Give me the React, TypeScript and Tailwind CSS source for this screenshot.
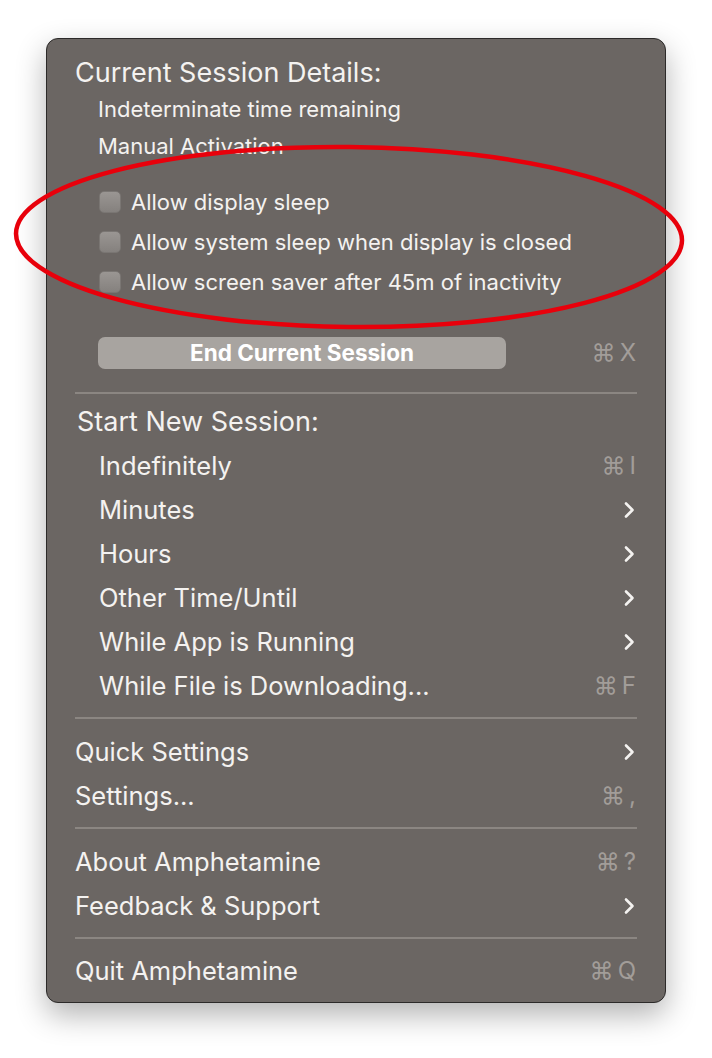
import { ReactNode } from 'react';

const font = { fontFamily: 'Inter, "Noto Sans", "Liberation Sans", sans-serif' };

function Chevron() {
  return (
    <svg width="16" height="20" viewBox="0 0 16 20" className="-mr-[1px]">
      <path d="M5 3.5l6.5 6.5-6.5 6.5" fill="none" stroke="#f4f2f0" strokeWidth="2.6" strokeLinecap="round" strokeLinejoin="round" />
    </svg>
  );
}

function Shortcut({ k }: { k: string }) {
  return (
    <span className="flex items-center gap-[4px] text-[24px] leading-none text-[#a29d99]">
      <span className="text-[24px]">⌘</span>
      <span>{k}</span>
    </span>
  );
}

function Row({ label, right, indent = true }: { label: string; right?: ReactNode; indent?: boolean }) {
  return (
    <div className={`flex items-center justify-between h-[44px] ${indent ? 'pl-[52px]' : 'pl-[28px]'} pr-[29px]`}>
      <span className="text-[25.5px] leading-none text-[#f4f2f0]">{label}</span>
      {right}
    </div>
  );
}

function Separator() {
  return <div className="mx-[28px] h-[2px] bg-[#8b8682]" />;
}

function CheckRow({ label }: { label: string }) {
  return (
    <div className="flex items-center h-[40px] pl-[52px] gap-[10px]">
      <div className="w-[22px] h-[22px] rounded-[5px] bg-gradient-to-b from-[#9a9693] to-[#85817e] border border-[#7a7673]" />
      <span className="text-[22px] leading-none text-[#f4f2f0]">{label}</span>
    </div>
  );
}

export default function App() {
  return (
    <div className="relative w-[712px] h-[1058px] bg-white" style={font}>
      <div className="absolute left-[46px] top-[38px] w-[620px] h-[965px] rounded-[12px] bg-[#6b6663] border border-[#2c2a29] shadow-[0_12px_30px_rgba(0,0,0,0.3)] overflow-hidden">
        <div className="pt-[15px]">
          <div className="flex items-center h-[36px] pl-[28px]">
            <span className="text-[27px] leading-none text-[#f4f2f0]">Current Session Details:</span>
          </div>
          <div className="flex items-center h-[38px] pl-[51px]">
            <span className="text-[22px] leading-none text-[#f4f2f0]">Indeterminate time remaining</span>
          </div>
          <div className="flex items-center h-[36px] pl-[51px]">
            <span className="text-[22px] leading-none text-[#f4f2f0]">Manual Activation</span>
          </div>
          <div className="mt-[18px]">
            <CheckRow label="Allow display sleep" />
            <CheckRow label="Allow system sleep when display is closed" />
            <CheckRow label="Allow screen saver after 45m of inactivity" />
          </div>
          <div className="flex items-center justify-between h-[32px] mt-[35px] pl-[51px] pr-[29px]">
            <div className="w-[408px] h-[32px] rounded-[7px] bg-[#a8a4a0] flex items-center justify-center">
              <span className="text-[22.5px] leading-none font-bold text-white">End Current Session</span>
            </div>
            <Shortcut k="X" />
          </div>
          <div className="mt-[23px]">
            <Separator />
          </div>
          <div className="flex items-center h-[36px] pl-[30px] mt-[9px]">
            <span className="text-[27px] leading-none text-[#f4f2f0]">Start New Session:</span>
          </div>
          <div className="mt-[5px]">
            <Row label="Indefinitely" right={<Shortcut k="I" />} />
            <Row label="Minutes" right={<Chevron />} />
            <Row label="Hours" right={<Chevron />} />
            <Row label="Other Time/Until" right={<Chevron />} />
            <Row label="While App is Running" right={<Chevron />} />
            <Row label="While File is Downloading..." right={<Shortcut k="F" />} />
          </div>
          <div className="mt-[9px]">
            <Separator />
          </div>
          <div className="mt-[11px]">
            <Row indent={false} label="Quick Settings" right={<Chevron />} />
            <Row indent={false} label="Settings..." right={<Shortcut k="," />} />
          </div>
          <div className="mt-[9px]">
            <Separator />
          </div>
          <div className="mt-[11px]">
            <Row indent={false} label="About Amphetamine" right={<Shortcut k="?" />} />
            <Row indent={false} label="Feedback & Support" right={<Chevron />} />
          </div>
          <div className="mt-[9px]">
            <Separator />
          </div>
          <div className="mt-[10px]">
            <Row indent={false} label="Quit Amphetamine" right={<Shortcut k="Q" />} />
          </div>
        </div>
      </div>
      <svg className="absolute left-0 top-0 pointer-events-none" width="712" height="1058">
        <ellipse cx="349" cy="237" rx="333" ry="90" fill="none" stroke="#e8000b" strokeWidth="4.5" transform="rotate(0.6 349 237)" />
      </svg>
    </div>
  );
}
